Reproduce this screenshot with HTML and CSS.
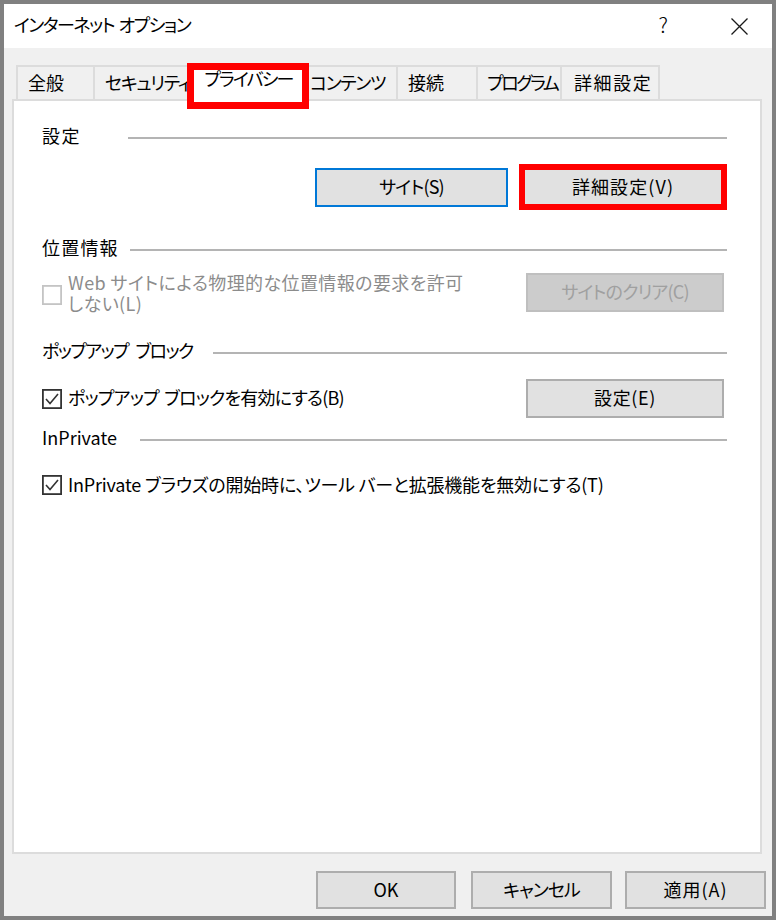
FILE: index.html
```html
<html>
	<head>
		<title>インターネット オプション</title>
		<meta charset="utf-8">
		<link rel="stylesheet" href="styles.css">
	</head>
	<body>
		<div class="window">
			<div class="titlebar">
				<span class="title">インターネット オプション</span>
				<span class="help">?</span>
				<svg class="close" width="17" height="17" viewBox="0 0 17 17"><path d="M0.5 0.5L16.5 16.5M16.5 0.5L0.5 16.5" stroke="#1a1a1a" stroke-width="1.3" fill="none"/></svg>
			</div>

			<div class="content">
				<div class="tabs">
					<div class="tab tab-general">全般</div>
					<div class="tab tab-security">セキュリティ</div>
					<div class="tab tab-privacy selected">プライバシー</div>
					<div class="tab tab-contents">コンテンツ</div>
					<div class="tab tab-connect">接続</div>
					<div class="tab tab-program">プログラム</div>
					<div class="tab tab-advanced">詳細設定</div>
					<div class="mark-tab"></div>
				</div>

				<div class="panel">
					<div class="group-head head-settings"><span class="group-label">設定</span><span class="group-line"></span></div>
					<div class="row row-settings">
						<button class="button button-default button-site">サイト(S)</button>
						<div class="mark-button"><button class="button button-marked">詳細設定(V)</button></div>
					</div>

					<div class="group-head head-location"><span class="group-label">位置情報</span><span class="group-line"></span></div>
					<div class="row row-location">
						<span class="check disabled"><svg width="20" height="20" viewBox="0 0 20 20"><rect x="0.9" y="0.9" width="18.2" height="18.2" fill="#fff" stroke="#c4c4c4" stroke-width="1.8"/></svg></span>
						<span class="check-text disabled-text"><span class="text-line">Web サイトによる物理的な位置情報の要求を許可</span><span class="text-line">しない(L)</span></span>
						<button class="button button-disabled button-right button-clear">サイトのクリア(C)</button>
					</div>

					<div class="group-head head-popup"><span class="group-label">ポップアップ ブロック</span><span class="group-line"></span></div>
					<div class="row row-popup">
						<span class="check"><svg width="20" height="20" viewBox="0 0 20 20"><rect x="0.9" y="0.9" width="18.2" height="18.2" fill="#fff" stroke="#333" stroke-width="1.8"/><polyline points="4,10 8,14.5 16,5" fill="none" stroke="#333" stroke-width="1.6"/></svg></span>
						<span class="check-text">ポップアップ ブロックを有効にする(B)</span>
						<button class="button button-right button-popup">設定(E)</button>
					</div>

					<div class="group-head head-private"><span class="group-label">InPrivate</span><span class="group-line"></span></div>
					<div class="row row-private">
						<span class="check"><svg width="20" height="20" viewBox="0 0 20 20"><rect x="0.9" y="0.9" width="18.2" height="18.2" fill="#fff" stroke="#333" stroke-width="1.8"/><polyline points="4,10 8,14.5 16,5" fill="none" stroke="#333" stroke-width="1.6"/></svg></span>
						<span class="check-text">InPrivate ブラウズの開始時に、ツール バーと拡張機能を無効にする(T)</span>
					</div>
				</div>

				<div class="footer">
					<button class="button button-ok">OK</button>
					<button class="button button-cancel">キャンセル</button>
					<button class="button button-apply">適用(A)</button>
				</div>
			</div>
		</div>
	</body>
</html>
```

FILE: styles.css
```css
body {
	margin: 0px;
	padding: 4px;
	background: #808080;

	color: #000;
	font-family: "Noto Sans CJK JP", "Noto Sans", sans-serif;
	font-size: 18px;
	font-feature-settings: "palt" 1;
	line-height: 20px;
}

.window {
	display: flex;
	flex-direction: column;
	width: 768px;
	height: 912px;
	background: #f0f0f0;
}

/* title bar */

.titlebar {
	display: flex;
	align-items: center;
	box-sizing: border-box;
	height: 44px;
	padding-left: 10px;
	padding-bottom: 5px;
	background: #fff;
}

.titlebar .title {
	letter-spacing: -1.5px;
	word-spacing: 2px;
}

.titlebar .help {
	margin-left: auto;
	font-size: 21px;
	font-weight: 300;
}

.titlebar .close {
	margin-left: 63px;
	margin-right: 24px;
	margin-top: 5px;
}

/* tabs */

.content {
	display: flex;
	flex-direction: column;
	padding: 17px 6px 0px 8px;
}

.tabs {
	position: relative;
	display: flex;
	height: 34px;
	padding-left: 4px;
}

.tab {
	box-sizing: border-box;
	height: 34px;
	padding-top: 5px;
	padding-left: 10px;
	border-top: 2px solid #dcdcdc;
	border-left: 2px solid #dcdcdc;
	white-space: nowrap;
	overflow: hidden;
}

.tab-general { width: 77px; }
.tab-security { width: 97px; letter-spacing: -1.3px; }
.tab-privacy { width: 117px; letter-spacing: -1.8px; }
.tab-contents { width: 89px; padding-left: 3px; letter-spacing: -1.4px; }
.tab-connect { width: 80px; }
.tab-program { width: 84px; padding-left: 9px; letter-spacing: -2.4px; }
.tab-advanced { width: 100px; padding-left: 12px; letter-spacing: 1.6px; border-right: 2px solid #dcdcdc; }

.tab.selected {
	position: relative;
	z-index: 1;
	height: 38px;
	margin-top: -2px;
	padding-top: 3px;
	padding-left: 0px;
	text-align: center;
	background: #fff;
	border-right: 2px solid #dcdcdc;
}

.tab.selected + .tab {
	border-left: none;
}

.mark-tab {
	position: absolute;
	z-index: 2;
	left: 175px;
	top: -2px;
	box-sizing: border-box;
	width: 122px;
	height: 46px;
	border: 7px solid #ff0000;
}

/* panel */

.panel {
	box-sizing: border-box;
	width: 750px;
	height: 755px;
	padding: 0px 33px 0px 28px;
	background: #fff;
	border: 2px solid #dcdcdc;
}

.group-head {
	display: flex;
	align-items: center;
	height: 20px;
}

.group-label {
	padding-bottom: 4px;
	white-space: nowrap;
}

.group-line {
	flex: 1;
	height: 2px;
	margin-top: 1px;
	background: #b4b4b4;
}

.head-settings { margin-top: 26px; }
.head-settings .group-label { width: 86px; letter-spacing: 1.5px; }
.head-location { margin-top: 29px; }
.head-location .group-label { width: 88px; letter-spacing: 1.2px; }
.head-popup { margin-top: 28px; }
.head-popup .group-label { width: 171px; letter-spacing: -1.6px; word-spacing: 5px; }
.head-private { margin-top: 11px; }
.head-private .group-label { width: 98px; }

.row {
	display: flex;
	align-items: center;
}

.row-settings { margin-top: 17px; height: 46px; }
.row-location { margin-top: 13px; align-items: flex-start; }
.row-popup { margin-top: 17px; height: 39px; }
.row-private { margin-top: 26px; height: 20px; }

.check {
	display: block;
	width: 20px;
	height: 20px;
}

.check svg { display: block; }

.row-location .check { margin-top: 13px; }

.check-text {
	margin-left: 6px;
	padding-bottom: 3px;
	white-space: nowrap;
}

.row-location .check-text {
	display: flex;
	flex-direction: column;
	padding-bottom: 0px;
	letter-spacing: 0.4px;
}

.text-line {
	display: block;
	height: 21px;
	line-height: 21px;
}

.row-popup .check-text { letter-spacing: -0.8px; word-spacing: 2px; }
.row-private .check-text { letter-spacing: -0.2px; }

.disabled-text {
	color: #8c8c8c;
}

/* buttons */

.button {
	box-sizing: border-box;
	height: 39px;
	padding: 0px 0px 3px 0px;
	background: #e1e1e1;
	border: 2px solid #adadad;
	color: #000;
	font-family: inherit;
	font-size: 18px;
	font-feature-settings: "palt" 1;
	line-height: 20px;
	text-align: center;
	white-space: nowrap;
}

.button-default {
	border-color: #0078d7;
}

.button-site {
	width: 200px;
	margin-left: 273px;
	letter-spacing: -0.8px;
}

.mark-button {
	box-sizing: border-box;
	width: 208px;
	height: 46px;
	margin-left: 11px;
	border: 6px solid #ff0000;
}

.button-marked {
	display: block;
	width: 196px;
	height: 34px;
	border: none;
	letter-spacing: 1.1px;
}

.button-right {
	width: 198px;
	margin-left: auto;
	margin-right: 3px;
}

.button-clear {
	margin-top: 1px;
	letter-spacing: -0.8px;
}

.button-popup {
	letter-spacing: 0.6px;
}

.button-disabled {
	background: #cccccc;
	border-color: #bfbfbf;
	color: #a0a0a0;
}

/* footer */

.footer {
	display: flex;
	justify-content: flex-end;
	margin-top: 17px;
}

.footer .button {
	height: 38px;
}

.button-ok { width: 140px; }
.button-cancel { width: 141px; margin-left: 15px; letter-spacing: -1px; }
.button-apply { width: 141px; margin-left: 13px; letter-spacing: 1px; }
```
